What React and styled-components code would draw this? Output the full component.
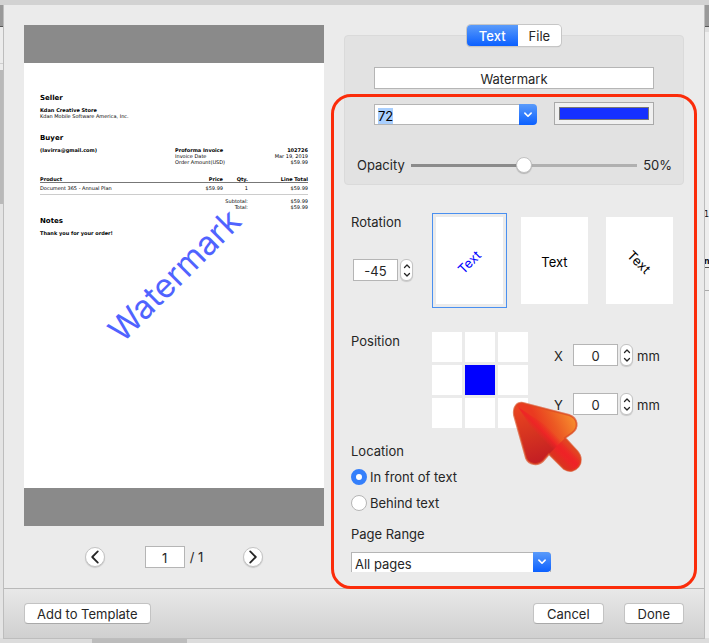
import React, { useEffect, useRef, useState } from 'react'
import styled, { createGlobalStyle } from 'styled-components'

const rotations = [
    { angle: -45 },
    { angle: 0 },
    { angle: 45 },
]

const positions = [
    'Top left', 'Top', 'Top right',
    'Left', 'Center', 'Right',
    'Bottom left', 'Bottom', 'Bottom right',
]

function Chevron({ dir, size = 8 }) {
    const paths = {
        up: 'M1.5 5.5 L4 3 L6.5 5.5',
        down: 'M1.5 2.5 L4 5 L6.5 2.5',
        left: 'M5.4 1.2 L2.6 4 L5.4 6.8',
        right: 'M2.6 1.2 L5.4 4 L2.6 6.8',
    }
    return (
        <svg width={size} height={size} viewBox="0 0 8 8" fill="none" stroke="currentColor"
            strokeWidth={size > 12 ? 0.9 : 1.3} strokeLinecap="round" strokeLinejoin="round">
            <path d={paths[dir]} />
        </svg>
    )
}

function NumberField({ id, value, onChange, label }) {
    return (
        <NumberRow>
            <SmallInput id={id} aria-label={label} type="text" value={value}
                onChange={(e) => onChange(e.target.value)} />
            <Stepper>
                <StepButton type="button" aria-label={label + ' up'} onClick={() => onChange(Number(value) + 1)}>
                    <Chevron dir="up" />
                </StepButton>
                <StepButton type="button" aria-label={label + ' down'} onClick={() => onChange(Number(value) - 1)}>
                    <Chevron dir="down" />
                </StepButton>
            </Stepper>
        </NumberRow>
    )
}

function Invoice({ text, angle, opacity }) {
    return (
        <Paper>
            <PaperHeading>Seller</PaperHeading>
            <PaperLine $bold>Kdan Creative Store</PaperLine>
            <PaperLine>Kdan Mobile Software America, Inc.</PaperLine>

            <PaperHeading $space={15}>Buyer</PaperHeading>
            <BuyerRow>
                <PaperLine $bold>(lavirra@gmail.com)</PaperLine>
                <div>
                    <PaperLine $bold>Proforma Invoice</PaperLine>
                    <PaperLine>Invoice Date</PaperLine>
                    <PaperLine>Order Amount(USD)</PaperLine>
                </div>
                <PaperRight>
                    <PaperLine $bold>102726</PaperLine>
                    <PaperLine>Mar 19, 2019</PaperLine>
                    <PaperLine>$59.99</PaperLine>
                </PaperRight>
            </BuyerRow>

            <ItemTable>
                <thead>
                    <tr>
                        <th>Product</th>
                        <th>Price</th>
                        <th>Qty.</th>
                        <th>Line Total</th>
                    </tr>
                </thead>
                <tbody>
                    <tr>
                        <td>Document 365 - Annual Plan</td>
                        <td>$59.99</td>
                        <td>1</td>
                        <td>$59.99</td>
                    </tr>
                </tbody>
            </ItemTable>
            <Totals>
                <span>Subtotal:</span>
                <span>$59.99</span>
                <span>Total:</span>
                <span>$59.99</span>
            </Totals>

            <PaperHeading $space={7}>Notes</PaperHeading>
            <PaperLine $bold>Thank you for your order!</PaperLine>

            <WatermarkLayer>
                <span style={{ transform: `rotate(${angle}deg)`, opacity: opacity / 100 + 0.25 }}>{text}</span>
            </WatermarkLayer>
        </Paper>
    )
}

const arrowPath = 'M11 2 L57 14 C66 17 67 27 60 32 L53 37 L65 50 C75 61 63 75 52 68 L37 53 L31 60 C26 65 17 64 14 57 L2 14 C1 6 5 1 11 2 Z'

function Pointer() {
    return (
        <PointerSvg width="72" height="73" viewBox="0 0 72 73">
            <defs>
                <linearGradient id="wingRight" gradientUnits="userSpaceOnUse" x1="30" y1="30" x2="62" y2="14">
                    <stop offset="0" stopColor="#ea3a20" />
                    <stop offset="0.4" stopColor="#ec5a23" />
                    <stop offset="1" stopColor="#f7902f" />
                </linearGradient>
                <linearGradient id="wingLeft" gradientUnits="userSpaceOnUse" x1="8" y1="6" x2="24" y2="60">
                    <stop offset="0" stopColor="#ea4420" />
                    <stop offset="0.5" stopColor="#d63420" />
                    <stop offset="1" stopColor="#c41f23" />
                </linearGradient>
                <linearGradient id="tail" gradientUnits="userSpaceOnUse" x1="44" y1="60" x2="60" y2="44">
                    <stop offset="0" stopColor="#d8351f" />
                    <stop offset="0.5" stopColor="#ee2425" />
                    <stop offset="1" stopColor="#e04a22" />
                </linearGradient>
                <linearGradient id="spine" gradientUnits="userSpaceOnUse" x1="29" y1="37" x2="38" y2="28">
                    <stop offset="0" stopColor="#ee2326" stopOpacity="0" />
                    <stop offset="0.45" stopColor="#ee2326" stopOpacity="0.9" />
                    <stop offset="1" stopColor="#ee2326" stopOpacity="0" />
                </linearGradient>
                <clipPath id="arrowShape">
                    <path d={arrowPath} />
                </clipPath>
            </defs>
            <g clipPath="url(#arrowShape)">
                <rect width="72" height="73" fill="url(#wingLeft)" />
                <path d="M4 4 L73 73 L73 0 L4 0 Z" fill="url(#wingRight)" />
                <path d="M45 45 L53 37 L80 62 L62 80 L37 53 Z" fill="url(#tail)" />
                <path d="M6 6 L53 37 L72 60 L60 72 L37 53 Z" fill="url(#spine)" />
            </g>
            <path d={arrowPath} fill="none" stroke="#dc4a22" strokeWidth="2" strokeOpacity="0.7" />
        </PointerSvg>
    )
}

function App() {
    const [tab, setTab] = useState('Text')
    const [text, setText] = useState('Watermark')
    const [size, setSize] = useState('72')
    const [color, setColor] = useState('#1530ff')
    const [opacity, setOpacity] = useState(50)
    const [angle, setAngle] = useState(-45)
    const [position, setPosition] = useState('Center')
    const [x, setX] = useState(0)
    const [y, setY] = useState(0)
    const [location, setLocation] = useState('front')
    const [page, setPage] = useState('1')
    const sizeRef = useRef(null)

    useEffect(() => {
        sizeRef.current.focus()
        sizeRef.current.select()
    }, [])

    return (
        <Screen>
            <GlobalStyle />
            <ToolbarEdge />
            <Middle>
                <LeftEdge />
                <Dialog>
                    <Body>
                        <PreviewColumn>
                            <Preview>
                                <Invoice text={text} angle={angle} opacity={opacity} />
                            </Preview>
                            <Pager>
                                <RoundButton type="button" aria-label="Previous page">
                                    <Chevron dir="left" size={16} />
                                </RoundButton>
                                <PageLabel>
                                    <PageInput type="text" aria-label="Page" value={page} onChange={(e) => setPage(e.target.value)} />
                                    <span>/ 1</span>
                                </PageLabel>
                                <RoundButton type="button" aria-label="Next page">
                                    <Chevron dir="right" size={16} />
                                </RoundButton>
                            </Pager>
                        </PreviewColumn>

                        <Settings>
                            <Tabs>
                                {['Text', 'File'].map((name) => (
                                    <Tab key={name} type="button" $active={tab === name} onClick={() => setTab(name)}>{name}</Tab>
                                ))}
                            </Tabs>
                            <Group>
                                <TextInput type="text" aria-label="Watermark text" value={text} onChange={(e) => setText(e.target.value)} />
                                <StyleRow>
                                    <Combo>
                                        <ComboInput ref={sizeRef} type="text" aria-label="Font size" value={size}
                                            onChange={(e) => setSize(e.target.value)} />
                                        <ComboButton type="button" aria-label="Font sizes">
                                            <Chevron dir="down" size={10} />
                                        </ComboButton>
                                    </Combo>
                                    <ColorWell type="color" aria-label="Color" value={color} onChange={(e) => setColor(e.target.value)} />
                                </StyleRow>
                                <OpacityRow>
                                    <label htmlFor="opacity">Opacity</label>
                                    <Slider id="opacity" type="range" min="0" max="100" value={opacity}
                                        onChange={(e) => setOpacity(Number(e.target.value))} />
                                    <span>{opacity}%</span>
                                </OpacityRow>
                            </Group>

                            <Options>
                                <RotationRow>
                                    <div>
                                        <Label as="label" htmlFor="rotation">Rotation</Label>
                                        <RotationValue>
                                            <NumberField id="rotation" label="Rotation" value={angle} onChange={setAngle} />
                                        </RotationValue>
                                    </div>
                                    <Thumbs>
                                        {rotations.map((r) => (
                                            <Thumb key={r.angle} type="button" $active={r.angle === angle} onClick={() => setAngle(r.angle)}>
                                                <ThumbPage><ThumbText $angle={r.angle}>Text</ThumbText></ThumbPage>
                                            </Thumb>
                                        ))}
                                    </Thumbs>
                                </RotationRow>

                                <PositionRow>
                                    <Label>Position</Label>
                                    <PositionBody>
                                        <PositionGrid>
                                            {positions.map((name) => (
                                                <PositionCell key={name} type="button" aria-label={name}
                                                    $active={name === position} onClick={() => setPosition(name)} />
                                            ))}
                                        </PositionGrid>
                                        <Offsets>
                                            <OffsetRow>
                                                <label htmlFor="offset-x">X</label>
                                                <NumberField id="offset-x" label="X" value={x} onChange={setX} />
                                                <Unit>mm</Unit>
                                            </OffsetRow>
                                            <OffsetRow>
                                                <label htmlFor="offset-y">Y</label>
                                                <NumberField id="offset-y" label="Y" value={y} onChange={setY} />
                                                <Unit>mm</Unit>
                                            </OffsetRow>
                                        </Offsets>
                                        <Pointer />
                                    </PositionBody>
                                </PositionRow>

                                <Location>
                                    <Label>Location</Label>
                                    <RadioLabel>
                                        <Radio type="radio" name="location" checked={location === 'front'} onChange={() => setLocation('front')} />
                                        In front of text
                                    </RadioLabel>
                                    <RadioLabel>
                                        <Radio type="radio" name="location" checked={location === 'behind'} onChange={() => setLocation('behind')} />
                                        Behind text
                                    </RadioLabel>
                                </Location>

                                <Label as="label" htmlFor="range">Page Range</Label>
                                <SelectBox>
                                    <Select id="range" defaultValue="All pages">
                                        <option>All pages</option>
                                        <option>Odd pages</option>
                                        <option>Even pages</option>
                                    </Select>
                                    <SelectArrow><Chevron dir="down" size={10} /></SelectArrow>
                                </SelectBox>
                            </Options>
                            <Highlight />
                        </Settings>
                    </Body>

                    <Footer>
                        <PushButton type="button">Add to Template</PushButton>
                        <FooterRight>
                            <DialogButton type="button">Cancel</DialogButton>
                            <DialogButton type="button">Done</DialogButton>
                        </FooterRight>
                    </Footer>
                </Dialog>
                <RightEdge>
                    <span>1</span>
                    <b>n</b>
                </RightEdge>
            </Middle>
            <BottomEdge />
        </Screen>
    )
}

export default App

const GlobalStyle = createGlobalStyle`
    * {
        box-sizing: border-box;
    }
    body {
        margin: 0;
        background: #ebebeb;
        color: #262626;
        font-family: Inter, "Liberation Sans", sans-serif;
        font-size: 13px;
        line-height: 16px;
    }
    button, input, select {
        font: inherit;
        color: inherit;
        margin: 0;
        padding: 0;
        border: 0;
        border-radius: 0;
        outline: none;
    }
    button {
        display: flex;
        align-items: center;
        justify-content: center;
    }
    svg {
        flex-shrink: 0;
    }
`

const Screen = styled.div`
    min-height: 100vh;
    display: flex;
    flex-direction: column;
    overflow: hidden;
`

const ToolbarEdge = styled.div`
    height: 5px;
    background: #d2d2d2;
`

const Middle = styled.div`
    flex: 1;
    display: grid;
    grid-template-columns: 4px minmax(0, 1fr) 5px;
`

const LeftEdge = styled.div`
    background: linear-gradient(#999 0 21px, #555 21px 22px, #ececec 22px 58px, #cfcfcf 58px 59px, #ececec 59px 65px, #b9b9b9 65px 199px, #e4e4e4 199px);
`

const RightEdge = styled.div`
    padding-top: 204px;
    overflow: hidden;
    font-family: "DejaVu Sans", sans-serif;
    font-size: 8px;
    line-height: 12px;
    color: #111;
    background: linear-gradient(#999 0 21px, #555 21px 22px, #ddd 22px 27px, #eee 27px 262px, #555 262px 263px, #eee 263px 285px, #aaa 285px 286px, #eee 286px);

    span, b {
        display: block;
    }
    b {
        margin-top: 35px;
    }
`

const BottomEdge = styled.div`
    height: 5px;
    background: linear-gradient(90deg, #dcdcdc 0 92px, #bcbcbc 92px 187px, #dcdcdc 187px);
`

const Dialog = styled.main`
    display: flex;
    flex-direction: column;
    background: #ebebeb;
    box-shadow: 0 0 0 1px #bdbdbd;
    clip-path: inset(0 -1px -1px -1px);
`

const Body = styled.div`
    flex: 1;
    display: flex;
    gap: 20px;
    padding: 20px 20px 16px;
`

const PreviewColumn = styled.section`
    width: 300px;
    flex-shrink: 0;
`

const Preview = styled.div`
    padding: 38px 0;
    background: #8a8a8a;
`

const Paper = styled.div`
    position: relative;
    min-height: 425px;
    padding: 31px 16px 0;
    overflow: hidden;
    background: #fff;
    color: #000;
    font-family: "DejaVu Sans", sans-serif;
    font-size: 5px;
    line-height: 6px;
`

const PaperHeading = styled.h2`
    margin: ${({ $space }) => $space || 0}px 0 5px;
    font-size: 7px;
    line-height: 8px;
`

const PaperLine = styled.div`
    font-weight: ${({ $bold }) => ($bold ? 700 : 400)};
`

const PaperRight = styled.div`
    text-align: right;
`

const BuyerRow = styled.div`
    display: grid;
    grid-template-columns: 135px 1fr auto;
`

const ItemTable = styled.table`
    width: 100%;
    margin-top: 11px;
    border-collapse: collapse;
    table-layout: fixed;

    th, td {
        padding: 0;
        text-align: right;
        white-space: nowrap;
    }
    th {
        border-bottom: 1px solid #777;
    }
    td {
        padding: 2px 0 3px;
        border-bottom: 1px solid #ccc;
    }
    th:first-child, td:first-child {
        text-align: left;
        width: 145px;
    }
    th:nth-child(2) {
        width: 38px;
    }
    th:nth-child(3) {
        width: 25px;
    }
`

const Totals = styled.div`
    display: grid;
    grid-template-columns: 208px 1fr;
    margin-top: 3px;
    text-align: right;
`

const WatermarkLayer = styled.div`
    position: absolute;
    inset: 0;
    display: flex;
    justify-content: center;
    padding-top: 188px;

    span {
        height: 48px;
        color: #1530ff;
        font-family: Inter, "Liberation Sans", sans-serif;
        font-size: 33px;
        line-height: 48px;
    }
`

const Pager = styled.div`
    display: flex;
    align-items: center;
    justify-content: center;
    gap: 40px;
    margin-top: 20px;
`

const RoundButton = styled.button`
    width: 20px;
    height: 20px;
    border: 1px solid #c3c3c3;
    border-radius: 50%;
    background: #fff;
    box-shadow: 0 1px 1px rgba(0, 0, 0, 0.15);
`

const PageLabel = styled.div`
    display: flex;
    align-items: center;
    gap: 5px;
`

const Field = styled.input`
    height: 22px;
    padding-top: 2px;
    border: 1px solid #b5b5b5;
    background: #fff;
    text-align: center;
`

const PageInput = styled(Field)`
    width: 40px;
`

const SmallInput = styled(Field)`
    width: 45px;
`

const TextInput = styled(Field)`
    display: block;
    width: 100%;
`

const Settings = styled.section`
    position: relative;
    flex: 1;
    min-width: 0;
`

const Tabs = styled.div`
    position: relative;
    z-index: 1;
    width: max-content;
    display: flex;
    margin: 0 auto -11px;
    border-radius: 4px;
    box-shadow: 0 0 0 1px #c6c6c6, 0 1px 1px #a5a5a5;
    overflow: hidden;
`

const Tab = styled.button`
    height: 21px;
    padding: 0 12px;
    color: ${({ $active }) => ($active ? '#fff' : '#262626')};
    font-weight: ${({ $active }) => ($active ? 500 : 400)};
    background: ${({ $active }) => ($active ? 'linear-gradient(#5a9bfa, #0b60ff)' : '#fff')};

    &:last-child {
        padding: 0 11px;
    }
`

const Group = styled.div`
    min-height: 150px;
    padding: 31px 29px 0;
    border: 1px solid #dadada;
    border-radius: 4px;
    background: #e2e2e2;
`

const StyleRow = styled.div`
    display: flex;
    align-items: flex-end;
    gap: 17px;
    margin-top: 13px;
`

const Combo = styled.div`
    flex: 1;
    min-width: 0;
    display: flex;
    height: 21px;
`

const ComboInput = styled.input`
    flex: 1;
    min-width: 0;
    padding: 3px 0 0 3px;
    border: 1px solid #b5b5b5;
    border-right: 0;
    background: #fff;
    color: #000;

    &::selection {
        background: #a9cffe;
        color: #000;
    }
`

const ComboButton = styled.button`
    width: 18px;
    border-radius: 0 4px 4px 0;
    color: #fff;
    background: linear-gradient(#5a9bfa, #0b60ff);
`

const ColorWell = styled.input`
    appearance: none;
    flex: 0 0 100px;
    width: 100px;
    height: 23px;
    padding: 4px;
    border: 1px solid #a9a9a9;
    background: #f0f0f0;

    &::-webkit-color-swatch-wrapper {
        padding: 0;
    }
    &::-webkit-color-swatch {
        border: 1px solid #777;
        border-radius: 0;
    }
`

const OpacityRow = styled.div`
    display: flex;
    align-items: center;
    gap: 6px;
    margin: 32px -18px 0 -17px;
`

const Slider = styled.input`
    appearance: none;
    flex: 1;
    min-width: 0;
    height: 16px;
    background: linear-gradient(90deg, #8b8b8b 50%, #b0b0b0 50%) center / 100% 3px no-repeat;

    &::-webkit-slider-thumb {
        appearance: none;
        width: 16px;
        height: 16px;
        border: 1px solid #c2c2c2;
        border-radius: 50%;
        background: #fff;
        box-shadow: 0 1px 1px rgba(0, 0, 0, 0.2);
    }
`

const Options = styled.div`
    padding: 28px 0 0 7px;
`

const Label = styled.div`
    display: block;
    padding-top: 1px;
`

const RotationRow = styled.div`
    display: grid;
    grid-template-columns: 81px 1fr;
`

const RotationValue = styled.div`
    padding: 29px 0 0 2px;
`

const NumberRow = styled.div`
    display: flex;
    gap: 2px;
`

const Stepper = styled.div`
    width: 13px;
    height: 22px;
    display: flex;
    flex-direction: column;
    padding: 1px 0;
    border: 1px solid #c3c3c3;
    border-radius: 6px;
    background: #fff;
    box-shadow: 0 1px 1px rgba(0, 0, 0, 0.15);
`

const StepButton = styled.button`
    flex: 1;
    min-height: 0;
    background: none;
`

const Thumbs = styled.div`
    display: flex;
    gap: 10px;
`

const Thumb = styled.button`
    width: 75px;
    height: 95px;
    padding: 3px;
    border: 1px solid ${({ $active }) => ($active ? '#4a90f0' : 'transparent')};
    background: none;
    color: ${({ $active }) => ($active ? '#00f' : '#000')};
`

const ThumbPage = styled.span`
    width: 67px;
    height: 87px;
    display: flex;
    align-items: center;
    justify-content: center;
    padding-top: 3px;
    background: #fff;
`

const ThumbText = styled.span`
    transform: rotate(${({ $angle }) => $angle}deg);
`

const PositionRow = styled(RotationRow)`
    margin-top: 24px;
`

const PositionBody = styled.div`
    position: relative;
    display: flex;
    gap: 26px;
`

const PositionGrid = styled.div`
    display: grid;
    grid-template-columns: repeat(3, 30px);
    grid-auto-rows: 30px;
    gap: 3px;
`

const PositionCell = styled.button`
    background: ${({ $active }) => ($active ? '#00f' : '#fff')};
`

const Offsets = styled.div`
    display: flex;
    flex-direction: column;
    gap: 27px;
    padding-top: 12px;
`

const OffsetRow = styled.div`
    display: flex;
    align-items: center;

    label {
        width: 19px;
        padding-top: 2px;
    }
`

const Unit = styled.span`
    padding: 2px 0 0 4px;
`

const PointerSvg = styled.svg`
    position: absolute;
    left: 80px;
    top: 69px;
`

const Location = styled.div`
    display: flex;
    flex-direction: column;
    align-items: flex-start;
    gap: 10px;
    margin: 14px 0;
`

const RadioLabel = styled.label`
    display: flex;
    align-items: center;
    gap: 3px;
`

const Radio = styled.input`
    appearance: none;
    width: 16px;
    height: 16px;
    border: 1px solid #b5b5b5;
    border-radius: 50%;
    background: #fff;

    &:checked {
        border: 5px solid #347ffb;
    }
`

const SelectBox = styled.div`
    position: relative;
    width: 200px;
    height: 20px;
    margin-top: 10px;
`

const Select = styled.select`
    appearance: none;
    display: block;
    width: 100%;
    height: 20px;
    padding: 3px 22px 0 3px;
    border: 1px solid #b5b5b5;
    border-bottom: 0;
    border-radius: 0 4px 0 0;
    background: #fff;
`

const SelectArrow = styled.span`
    position: absolute;
    top: 0;
    right: 0;
    width: 18px;
    height: 20px;
    display: flex;
    align-items: center;
    justify-content: center;
    border-radius: 0 4px 4px 0;
    color: #fff;
    background: linear-gradient(#5a9bfa, #0b60ff);
    pointer-events: none;
`

const Highlight = styled.div`
    position: absolute;
    top: 69px;
    right: -13px;
    bottom: -17px;
    left: -13px;
    z-index: 1;
    border: 3px solid #fb2c0a;
    border-radius: 20px;
    pointer-events: none;
`

const Footer = styled.footer`
    display: flex;
    align-items: flex-start;
    justify-content: space-between;
    height: 50px;
    padding: 14px 20px 0;
    border-top: 1px solid #b9b9b9;
    background: linear-gradient(#e8e8e8, #d0d0d0);
`

const FooterRight = styled.div`
    display: flex;
    gap: 20px;
`

const PushButton = styled.button`
    height: 21px;
    padding: 0 12px;
    border: 1px solid #c3c3c3;
    border-bottom-color: #a9a9a9;
    border-radius: 4px;
    background: #fff;
`

const DialogButton = styled(PushButton)`
    padding: 0 13px;
`
